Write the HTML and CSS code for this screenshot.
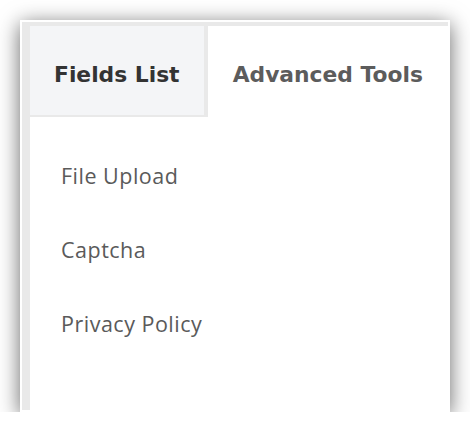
FILE: index.html
```html
<!DOCTYPE html>
<html>
<head>
<meta charset="utf-8">
<link rel="stylesheet" href="styles.css">
</head>
<body>
<div class="panel">
  <div class="frame">
    <div class="tabs">
      <div class="tab tab-active">Fields List</div>
      <div class="tab tab-other">Advanced Tools</div>
    </div>
    <ul class="list">
      <li class="item">File Upload</li>
      <li class="item">Captcha</li>
      <li class="item">Privacy Policy</li>
    </ul>
  </div>
</div>
</body>
</html>
```

FILE: styles.css
```css
html, body {
  margin: 0;
  padding: 0;
  background: #ffffff;
}
.panel {
  margin: 20px 0 0 20px;
  width: 430px;
  height: 392px;
  box-sizing: border-box;
  padding: 2px;
  background: #ffffff;
  box-shadow: 0 4px 20px rgba(0, 0, 0, 0.6);
}
.frame {
  height: 100%;
  box-sizing: border-box;
  background: #e9e9e9;
  padding: 4px 0 0 8px;
  display: flex;
  flex-direction: column;
}
.tabs {
  display: flex;
  align-items: flex-start;
}
.tab {
  font-family: "DejaVu Sans", Verdana, sans-serif;
  font-weight: bold;
  font-size: 21.8px;
  line-height: 24px;
  padding: 37px 24px 0;
  box-sizing: border-box;
  white-space: nowrap;
}
.tab-active {
  background: #f4f5f7;
  color: #333333;
  height: 89px;
  margin: 0 4px 2px 0;
}
.tab-other {
  flex: 1;
  background: #ffffff;
  color: #5c5c5c;
  height: 91px;
  text-align: center;
}
.list {
  flex: 1;
  margin: 0;
  padding: 47px 0 0 31px;
  list-style: none;
  background: #ffffff;
  font-family: "Open Sans", sans-serif;
  font-size: 21.5px;
  letter-spacing: 0.5px;
  color: #5a5a5a;
}
.item {
  height: 74px;
  line-height: 24px;
}
```
